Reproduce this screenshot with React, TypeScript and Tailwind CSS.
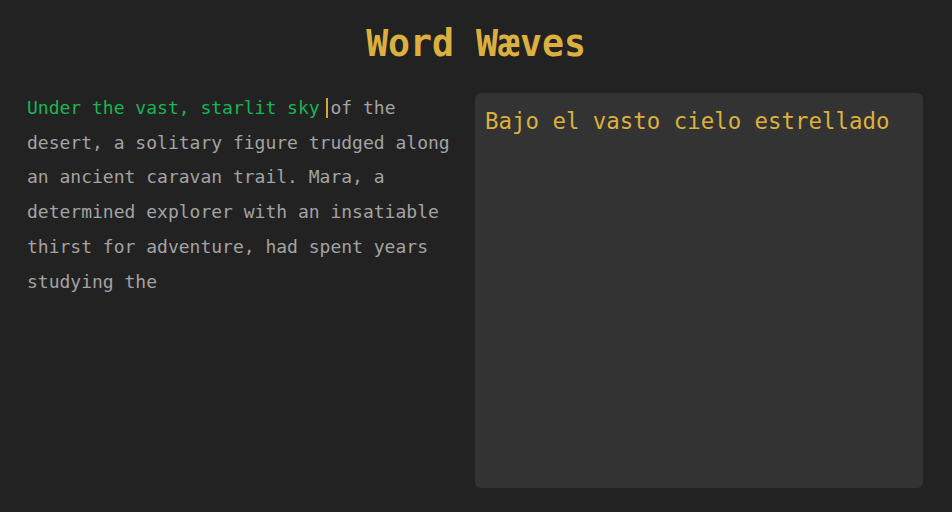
import React from 'react';

const App: React.FC = () => {
  return (
    <div className="min-h-screen w-full bg-[#222222] font-['DejaVu_Sans_Mono',monospace]">
      <h1 className="pt-[20px] text-center text-[36.5px] font-bold leading-[48px] text-[#dcb03e]">
        Word Wæves
      </h1>

      <div className="mt-[22px] grid grid-cols-[432px_448px] gap-4 pl-[27px] pr-[29px]">
        {/* Source text */}
        <p className="pt-[1px] text-[18px] leading-[34.7px] text-[#a3a3a3]">
          <span className="text-[#14b852]">Under the vast, starlit sky</span>{' '}
          <span className="-ml-[4px] mr-[2px] inline-block h-[20px] w-[2px] bg-[#d8a832] align-[-4px]"></span>
          of the desert, a solitary figure trudged along an ancient caravan trail. Mara, a determined explorer with an insatiable thirst for adventure, had spent years studying the
        </p>

        {/* Translation panel */}
        <div className="mt-[3px] h-[395px] rounded-md bg-[#333333] px-[10px] pt-[13px]">
          <p className="text-[22.4px] leading-[30px] text-[#dcb03e]">Bajo el vasto cielo estrellado</p>
        </div>
      </div>
    </div>
  );
};

export default App;
